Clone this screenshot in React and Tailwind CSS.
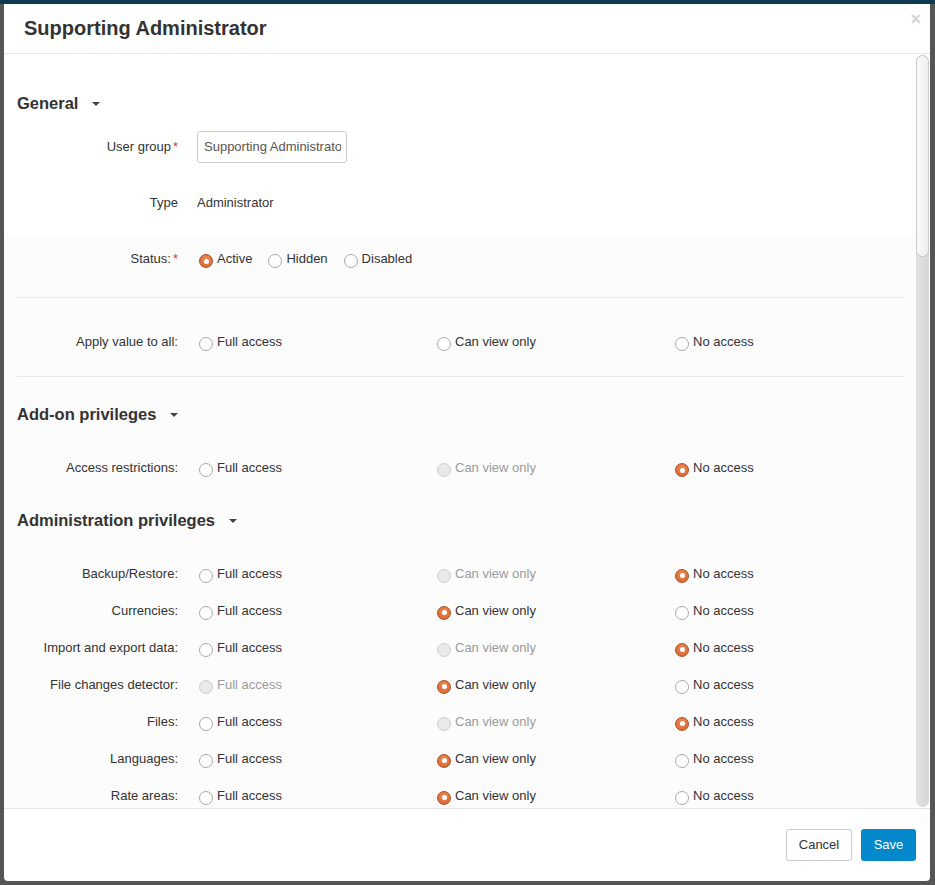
// Usergroup privileges modal

import React from 'react';

const Radio = ({ state = 'off', label }) => {
  const ring =
    state === 'on'
      ? 'border-[#b24f24] bg-[radial-gradient(circle_at_50%_35%,#f08a55,#d2602c)]'
      : state === 'disabled'
        ? 'border-[#cfcfcf] bg-[#e9e9e9]'
        : 'border-[#a9a9a9] bg-white';
  return (
    <span className="flex items-center gap-[4px] h-[20px]">
      <span
        className={`relative top-[2px] flex items-center justify-center shrink-0 w-[14px] h-[14px] rounded-full border ${ring}`}
      >
        {state === 'on' && <span className="w-[5px] h-[5px] rounded-full bg-white" />}
      </span>
      <span className={`leading-[20px] ${state === 'disabled' ? 'text-[#9a9a9a]' : 'text-[#333]'}`}>
        {label}
      </span>
    </span>
  );
};

const Caret = () => (
  <svg viewBox="0 0 8 4" className="w-[8px] h-[4px] ml-[14px] relative top-[1px]" fill="#444">
    <path d="M0 0h8L4 4z" />
  </svg>
);

const SectionTitle = ({ children, h }) => (
  <div className={`flex items-center ${h} text-[16.5px] font-bold text-[#333]`}>
    {children}
    <Caret />
  </div>
);

const Row = ({ label, required, h = 'h-[37px]', children }) => (
  <div className={`flex items-center ${h}`}>
    <div className="w-[161px] text-right text-[#333] shrink-0">
      {label}
      {required && <span className="text-[#e0344a] ml-[2px]">*</span>}
    </div>
    <div className="ml-[19px] flex items-center">{children}</div>
  </div>
);

const access = (full, view, none) => (
  <>
    <span className="w-[238px] pl-[2px] flex items-center">
      <Radio state={full} label="Full access" />
    </span>
    <span className="w-[238px] pl-[2px] flex items-center">
      <Radio state={view} label="Can view only" />
    </span>
    <span className="w-[238px] pl-[2px] flex items-center">
      <Radio state={none} label="No access" />
    </span>
  </>
);

const adminRows = [
  ['Backup/Restore:', 'off', 'disabled', 'on'],
  ['Currencies:', 'off', 'on', 'off'],
  ['Import and export data:', 'off', 'disabled', 'on'],
  ['File changes detector:', 'disabled', 'on', 'off'],
  ['Files:', 'off', 'disabled', 'on'],
  ['Languages:', 'off', 'on', 'off'],
  ['Rate areas:', 'off', 'on', 'off'],
];

export default function App() {
  return (
    <div className="relative w-[935px] h-[885px] overflow-hidden bg-[#555] font-['Liberation_Sans',Arial,sans-serif] text-[13px]">
      <div className="absolute top-0 left-0 right-0 h-[4px] bg-[#0f3a50]" />

      <div className="absolute left-[4px] top-[4px] w-[926px] h-[877px] bg-white rounded-b-[4px] flex flex-col overflow-hidden">
        {/* header */}
        <div className="relative h-[50px] shrink-0 border-b border-[#e5e5e5] flex items-center pl-[20px] pb-[1px]">
          <h3 className="text-[20px] font-bold text-[#333]">Supporting Administrator</h3>
          <span className="absolute right-[9px] top-[6px] text-[18px] font-bold leading-none text-[#d4d4d4]">×</span>
        </div>

        {/* body */}
        <div className="flex flex-1 min-h-0">
          <div className="flex-1 overflow-hidden">
            <div className="pl-[13px] pr-[12px] pt-[29px]">
              <SectionTitle h="h-[40px]">General</SectionTitle>
              <Row label="User group" required h="h-[47px]">
                <div className="w-[150px] h-[32px] border border-[#ccc] rounded-[3px] pl-[6px] flex items-center text-[#555]">
                  <span className="w-[137px] overflow-hidden whitespace-nowrap">Supporting Administrator</span>
                </div>
              </Row>
              <Row label="Type" h="h-[66px]">
                <span className="text-[#333]">Administrator</span>
              </Row>
            </div>

            <div className="bg-[#fcfcfc] pl-[13px] pr-[12px] h-full">
              <Row label="Status:" required h="h-[46px]">
                <span className="pl-[2px] flex gap-[16px]">
                  <Radio state="on" label="Active" />
                  <Radio label="Hidden" />
                  <Radio label="Disabled" />
                </span>
              </Row>
              <div className="h-[16px] border-b border-[#e8e8e8]" />
              <div className="h-[79px] pt-[10px] border-b border-[#e8e8e8] flex items-center">
                <Row label="Apply value to all:">{access('off', 'off', 'off')}</Row>
              </div>

              <SectionTitle h="h-[74px]">Add-on privileges</SectionTitle>
              <Row label="Access restrictions:" h="h-[34px]">
                {access('off', 'disabled', 'on')}
              </Row>

              <SectionTitle h="h-[70px]">Administration privileges</SectionTitle>
              {adminRows.map(([label, a, b, c]) => (
                <Row key={label} label={label}>
                  {access(a, b, c)}
                </Row>
              ))}
            </div>
          </div>

          {/* scrollbar */}
          <div className="w-[13px] shrink-0 mr-[1px] py-[1px] flex flex-col bg-white">
            <div className="flex-1 rounded-[7px] bg-[linear-gradient(90deg,#e2e2e2,#d6d6d6)] flex flex-col">
              <div className="h-[202px] rounded-[7px] border border-[#c9c9c9] bg-[linear-gradient(90deg,#fafafa,#efefef)]" />
            </div>
          </div>
        </div>

        {/* footer */}
        <div className="h-[73px] shrink-0 border-t border-[#e5e5e5] flex items-center justify-end pr-[14px] gap-[9px]">
          <button
            type="button"
            className="h-[32px] w-[66px] rounded-[3px] border border-[#ccc] bg-white text-[#333] text-[13px]"
          >
            Cancel
          </button>
          <button
            type="button"
            className="h-[32px] w-[55px] rounded-[3px] bg-[#0388cc] text-white text-[13px]"
          >
            Save
          </button>
        </div>
      </div>
    </div>
  );
}
